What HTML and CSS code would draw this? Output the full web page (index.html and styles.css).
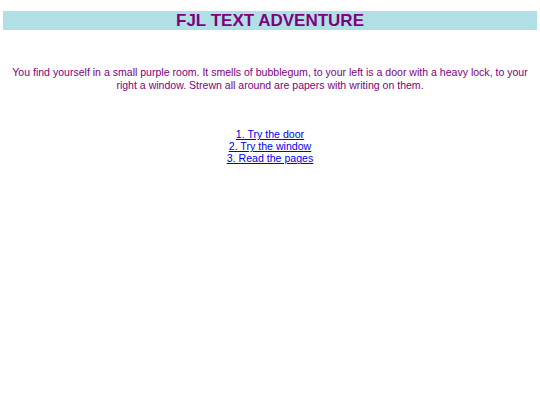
FILE: index.html
```html
<!DOCTYPE html>
<html>
<head>
<meta charset="utf-8">
<link rel="stylesheet" href="styles.css">
</head>
<body>
<h1 class="title">FJL TEXT ADVENTURE</h1>
<p class="story">You find yourself in a small purple room. It smells of bubblegum, to your left is a door with a heavy lock, to your right a window. Strewn all around are papers with writing on them.</p>
<div class="choices">
<a href="#" class="choice">1. Try the door</a>
<a href="#" class="choice">2. Try the window</a>
<a href="#" class="choice">3. Read the pages</a>
</div>
</body>
</html>
```
FILE: styles.css
```css
body {
  margin: 0;
  padding: 11px 3px;
  font-family: "Liberation Sans", Arial, sans-serif;
  background: #fff;
}
.title {
  margin: 0;
  background: #b0e0e6;
  color: #800080;
  text-align: center;
  font-size: 17px;
  line-height: 19px;
  font-weight: bold;
}
.story {
  margin: 36px 0 0;
  color: #800080;
  text-align: center;
  font-size: 10.55px;
  line-height: 13px;
}
.choices {
  margin-top: 36px;
  display: flex;
  flex-direction: column;
  align-items: center;
}
.choice {
  color: #0000ee;
  font-size: 10.6px;
  line-height: 12.2px;
}
```
